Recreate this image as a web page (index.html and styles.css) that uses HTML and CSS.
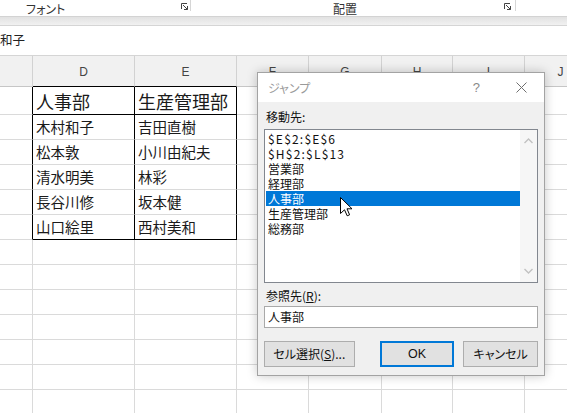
FILE: index.html
```html
<!DOCTYPE html>
<html lang="ja">
<head>
<meta charset="utf-8">
<link rel="stylesheet" href="styles.css">
</head>
<body>
<div class="screen">
  <div class="ribbon">
    <div class="group g-font">
      <span class="glabel">フォント</span>
      <svg class="launcher" width="8" height="8" viewBox="0 0 8 8"><path d="M0.5 6V0.5H6" fill="none" stroke="#444"/><path d="M2 2L6.5 6.5M3 6.5H6.5V3" fill="none" stroke="#444"/></svg>
    </div>
    <span class="sep"></span>
    <div class="group g-align">
      <span class="glabel">配置</span>
      <svg class="launcher" width="8" height="8" viewBox="0 0 8 8"><path d="M0.5 6V0.5H6" fill="none" stroke="#444"/><path d="M2 2L6.5 6.5M3 6.5H6.5V3" fill="none" stroke="#444"/></svg>
    </div>
    <span class="sep"></span>
  </div>
  <div class="shade"></div>
  <div class="formula">和子</div>
  <div class="sheet">
    <div class="c hd"></div><div class="c hd kb">D</div><div class="c hd kb">E</div><div class="c hd">F</div><div class="c hd">G</div><div class="c hd">H</div><div class="c hd">I</div><div class="c hd">J</div>

    <div class="c kr"></div><div class="c big kr kb">人事部</div><div class="c big kr kb">生産管理部</div><div class="c"></div><div class="c"></div><div class="c"></div><div class="c"></div><div class="c"></div>
    <div class="c kr"></div><div class="c kr">木村和子</div><div class="c kr">吉田直樹</div><div class="c"></div><div class="c"></div><div class="c"></div><div class="c"></div><div class="c"></div>
    <div class="c kr"></div><div class="c kr">松本敦</div><div class="c kr">小川由紀夫</div><div class="c"></div><div class="c"></div><div class="c"></div><div class="c"></div><div class="c"></div>
    <div class="c kr"></div><div class="c kr">清水明美</div><div class="c kr">林彩</div><div class="c"></div><div class="c"></div><div class="c"></div><div class="c"></div><div class="c"></div>
    <div class="c kr"></div><div class="c kr">長谷川修</div><div class="c kr">坂本健</div><div class="c"></div><div class="c"></div><div class="c"></div><div class="c"></div><div class="c"></div>
    <div class="c kr"></div><div class="c kr kb">山口絵里</div><div class="c kr kb">西村美和</div><div class="c"></div><div class="c"></div><div class="c"></div><div class="c"></div><div class="c"></div>

    <div class="c"></div><div class="c"></div><div class="c"></div><div class="c"></div><div class="c"></div><div class="c"></div><div class="c"></div><div class="c"></div>
    <div class="c"></div><div class="c"></div><div class="c"></div><div class="c"></div><div class="c"></div><div class="c"></div><div class="c"></div><div class="c"></div>
    <div class="c"></div><div class="c"></div><div class="c"></div><div class="c"></div><div class="c"></div><div class="c"></div><div class="c"></div><div class="c"></div>
    <div class="c"></div><div class="c"></div><div class="c"></div><div class="c"></div><div class="c"></div><div class="c"></div><div class="c"></div><div class="c"></div>
    <div class="c"></div><div class="c"></div><div class="c"></div><div class="c"></div><div class="c"></div><div class="c"></div><div class="c"></div><div class="c"></div>
    <div class="c"></div><div class="c"></div><div class="c"></div><div class="c"></div><div class="c"></div><div class="c"></div><div class="c"></div><div class="c"></div>
    <div class="c"></div><div class="c"></div><div class="c"></div><div class="c"></div><div class="c"></div><div class="c"></div><div class="c"></div><div class="c"></div>
  </div>

  <div class="dialog">
    <div class="titlebar">
      <span class="title">ジャンプ</span>
      <span class="help">?</span>
      <svg class="close" width="11" height="11" viewBox="0 0 11 11"><path d="M0.5 0.5L10.5 10.5M10.5 0.5L0.5 10.5" stroke="#6f6f6f" stroke-width="1"/></svg>
    </div>
    <div class="body">
      <div class="label">移動先:</div>
      <div class="listbox">
        <div class="items">
          <div class="item latin">$E$2:$E$6</div>
          <div class="item latin">$H$2:$L$13</div>
          <div class="item">営業部</div>
          <div class="item">経理部</div>
          <div class="item sel">人事部</div>
          <div class="item">生産管理部</div>
          <div class="item">総務部</div>
        </div>
        <div class="vscroll">
          <svg width="9" height="6" viewBox="0 0 9 6"><path d="M0.5 5L4.5 1L8.5 5" fill="none" stroke="#c2c2c2" stroke-width="1.4"/></svg>
          <svg width="9" height="6" viewBox="0 0 9 6"><path d="M0.5 1L4.5 5L8.5 1" fill="none" stroke="#c2c2c2" stroke-width="1.4"/></svg>
        </div>
      </div>
      <div class="label ref">参照先(<u>R</u>):</div>
      <div class="input">人事部</div>
      <div class="buttons">
        <div class="btn btn-sel">セル選択(<u>S</u>)...</div>
        <div class="btn btn-ok">OK</div>
        <div class="btn btn-cancel">キャンセル</div>
      </div>
    </div>
  </div>

  <svg class="cursor" width="13" height="20" viewBox="0 0 13 20"><path d="M0.5 0.5V16.5L4.5 12.8L7.2 18.8L9.6 17.8L7 11.8H12Z" fill="#fff" stroke="#000" stroke-width="1" stroke-linejoin="miter"/></svg>
</div>
</body>
</html>
```

FILE: styles.css
```css
html, body {
  margin: 0;
  padding: 0;
  background: #fff;
}

.screen {
  position: relative;
  width: 567px;
  height: 413px;
  overflow: hidden;
  font-family: "Noto Sans CJK JP", "Noto Sans", sans-serif;
  color: #222;
}

/* ribbon */
.ribbon {
  height: 16px;
  display: flex;
  align-items: flex-start;
  background: #fff;
}

.group {
  display: flex;
  align-items: flex-start;
  box-sizing: border-box;
  height: 16px;
}

.sep {
  width: 0;
  height: 11px;
  border-left: 1px solid #d6d6d6;
}

.glabel {
  font-size: 12px;
  line-height: 17px;
  height: 16px;
  color: #333;
  font-feature-settings: "palt";
}

.g-font {
  width: 190px;
  padding-left: 26px;
}

.g-font .glabel {
  width: 155px;
}

.g-align {
  width: 324px;
  padding-left: 142px;
}

.g-align .glabel {
  width: 171px;
}

.launcher {
  margin-top: 3px;
}

.shade {
  height: 9px;
  border-top: 1px solid #d3d3d3;
  background: linear-gradient(#e2e2e2, #f1f1f1);
  box-sizing: border-box;
}

.formula {
  height: 31px;
  box-sizing: border-box;
  border-top: 1px solid #d5d5d5;
  border-bottom: 1px solid #d5d5d5;
  background: #fff;
  font-size: 12.5px;
  line-height: 28px;
  color: #222;
}

/* sheet grid */
.sheet {
  display: grid;
  grid-template-columns: 33px 102px 102px 72px 73px 71px 72px 72px;
  grid-template-rows: 31px 28px repeat(12, 25px);
}

.c {
  box-sizing: border-box;
  border-right: 1px solid #dadada;
  border-bottom: 1px solid #dadada;
  display: flex;
  align-items: center;
  padding-left: 3px;
  font-size: 14.5px;
  line-height: 16px;
  color: #1a1a1a;
  white-space: nowrap;
  overflow: hidden;
}

.c.big {
  font-size: 18px;
  line-height: 20px;
}

.c.hd {
  background: #f1f1f1;
  border-right-color: #d2d2d2;
  border-bottom-color: #c6c6c6;
  justify-content: center;
  padding-left: 0;
  font-family: "Liberation Sans", sans-serif;
  font-size: 12px;
  color: #444;
  padding-top: 1px;
}

.c.kr {
  border-right-color: #000;
}

.c.kb {
  border-bottom-color: #000;
}

/* dialog */
.dialog {
  position: absolute;
  left: 257px;
  top: 72px;
  width: 288px;
  height: 304px;
  box-sizing: border-box;
  border: 1px solid #a3a3a3;
  background: #f0f0f0;
  box-shadow: 0 0 10px rgba(0, 0, 0, 0.22);
  display: flex;
  flex-direction: column;
  font-size: 12px;
  color: #111;
}

.titlebar {
  height: 29px;
  background: #fff;
  display: flex;
  align-items: center;
}

.title {
  margin-left: 10px;
  color: #9a9a9a;
  font-size: 12px;
  font-feature-settings: "palt";
  line-height: 14px;
}

.help {
  margin-left: auto;
  color: #8a8a8a;
  font-family: "Liberation Sans", sans-serif;
  font-size: 13px;
  line-height: 14px;
}

.close {
  margin-left: 36px;
  margin-right: 17px;
}

.body {
  padding: 7px 6px 8px 6px;
  display: flex;
  flex-direction: column;
}

.label {
  height: 15px;
  line-height: 15px;
  padding-left: 2px;
  font-size: 12px;
}

.listbox {
  margin-top: 5px;
  height: 154px;
  box-sizing: border-box;
  border: 1px solid #82878f;
  background: #fff;
  display: flex;
}

.items {
  flex: 1;
  padding-top: 1px;
  padding-left: 1px;
}

.item {
  height: 15px;
  line-height: 15px;
  padding-left: 2px;
  font-size: 12px;
  color: #111;
  overflow: hidden;
}

.item.latin {
  letter-spacing: 1.2px;
}

.item.sel {
  background: #0078d7;
  color: #fff;
}

.vscroll {
  width: 17px;
  background: #f6f6f6;
  display: flex;
  flex-direction: column;
  align-items: center;
  justify-content: space-between;
  padding: 8px 0 8px;
}

.label.ref {
  margin-top: 5px;
}

.input {
  margin-top: 3px;
  height: 22px;
  box-sizing: border-box;
  border: 1px solid #a9a9a9;
  background: #fff;
  padding-left: 3px;
  line-height: 19px;
  font-size: 12px;
}

.buttons {
  margin-top: 13px;
  display: flex;
}

.btn {
  height: 26px;
  box-sizing: border-box;
  border: 1px solid #adadad;
  background: #e1e1e1;
  display: flex;
  align-items: center;
  justify-content: center;
  font-size: 12px;
  line-height: 14px;
  color: #111;
  font-feature-settings: "palt";
}

.btn-sel {
  width: 91px;
}

.btn-ok {
  width: 75px;
  margin-left: 25px;
  border: 2px solid #0078d7;
  font-family: "Liberation Sans", sans-serif;
  font-size: 12.5px;
}

.btn-cancel {
  width: 75px;
  margin-left: 9px;
}

.cursor {
  position: absolute;
  left: 340px;
  top: 197px;
}
```
